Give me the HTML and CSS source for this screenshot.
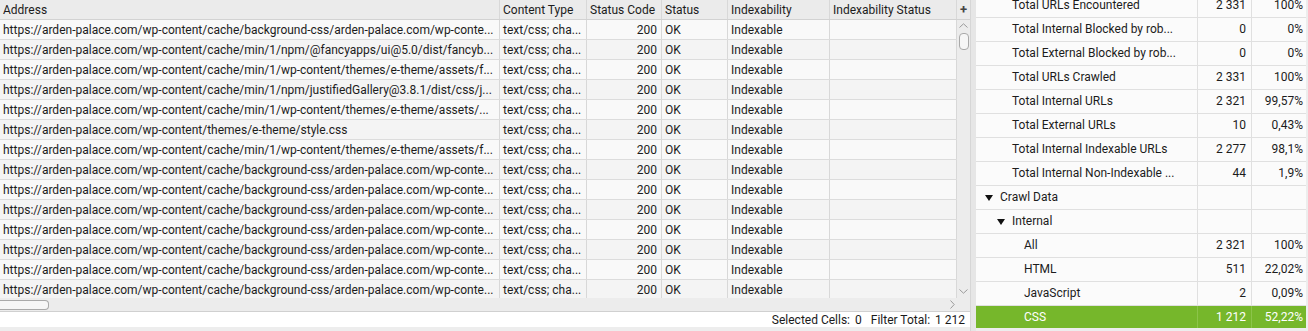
FILE: index.html
```html
<!DOCTYPE html>
<html lang="en">
<head>
    <meta charset="UTF-8">
    <title>Crawl Overview</title>
    <link rel="stylesheet" href="styles.css">
</head>
<body>

<div class="window">

    <!-- URL grid -->
    <div class="grid-pane">
        <div class="grid-head">
            <div class="cell col-address">Address</div>
            <div class="cell col-type">Content Type</div>
            <div class="cell col-code">Status Code</div>
            <div class="cell col-status">Status</div>
            <div class="cell col-index">Indexability</div>
            <div class="cell col-istatus">Indexability Status</div>
            <div class="corner">+</div>
        </div>

        <div class="grid-main">
            <div class="grid-body" id="grid-body"></div>
            <div class="vscroll">
                <svg class="arrow-up" width="9" height="5" viewBox="0 0 9 5"><path d="M0.5 4.5 L4.5 0.8 L8.5 4.5" fill="none" stroke="#9a9a9a" stroke-width="1"/></svg>
                <div class="vthumb"></div>
                <svg class="arrow-down" width="9" height="5" viewBox="0 0 9 5"><path d="M0.5 0.5 L4.5 4.2 L8.5 0.5" fill="none" stroke="#9a9a9a" stroke-width="1"/></svg>
            </div>
        </div>

        <div class="hscroll">
            <div class="hthumb"></div>
            <svg class="arrow-right" width="5" height="9" viewBox="0 0 5 9"><path d="M0.5 0.5 L4.2 4.5 L0.5 8.5" fill="none" stroke="#9a9a9a" stroke-width="1"/></svg>
        </div>

        <div class="status-bar">
            <span>Selected Cells:</span><span class="val">0</span>
            <span class="gap">Filter Total:</span><span class="val">1 212</span>
        </div>
    </div>

    <div class="splitter"></div>

    <!-- Overview tree -->
    <div class="overview-pane">
        <div class="tree" id="tree"></div>
    </div>

</div>

<script>
    // Rows of the URL grid
    const urls = [
        'https://arden-palace.com/wp-content/cache/background-css/arden-palace.com/wp-conte...',
        'https://arden-palace.com/wp-content/cache/min/1/npm/@fancyapps/ui@5.0/dist/fancyb...',
        'https://arden-palace.com/wp-content/cache/min/1/wp-content/themes/e-theme/assets/f...',
        'https://arden-palace.com/wp-content/cache/min/1/npm/justifiedGallery@3.8.1/dist/css/j...',
        'https://arden-palace.com/wp-content/cache/min/1/wp-content/themes/e-theme/assets/...',
        'https://arden-palace.com/wp-content/themes/e-theme/style.css',
        'https://arden-palace.com/wp-content/cache/min/1/wp-content/themes/e-theme/assets/f...',
        'https://arden-palace.com/wp-content/cache/background-css/arden-palace.com/wp-conte...',
        'https://arden-palace.com/wp-content/cache/background-css/arden-palace.com/wp-conte...',
        'https://arden-palace.com/wp-content/cache/background-css/arden-palace.com/wp-conte...',
        'https://arden-palace.com/wp-content/cache/background-css/arden-palace.com/wp-conte...',
        'https://arden-palace.com/wp-content/cache/background-css/arden-palace.com/wp-conte...',
        'https://arden-palace.com/wp-content/cache/background-css/arden-palace.com/wp-conte...',
        'https://arden-palace.com/wp-content/cache/background-css/arden-palace.com/wp-conte...'
    ];

    const body = document.getElementById('grid-body');
    urls.forEach((url, i) => {
        const row = document.createElement('div');
        row.className = 'grid-row' + (i % 2 ? ' odd' : '');
        row.innerHTML =
            `<div class="cell col-address">${url}</div>` +
            `<div class="cell col-type">text/css; cha...</div>` +
            `<div class="cell col-code">200</div>` +
            `<div class="cell col-status">OK</div>` +
            `<div class="cell col-index">Indexable</div>` +
            `<div class="cell col-istatus"></div>`;
        body.appendChild(row);
    });

    // Overview tree: [label, count, percent, level, expandable, selected]
    const items = [
        ['Total URLs Encountered', '2 331', '100%', 2],
        ['Total Internal Blocked by rob...', '0', '0%', 2],
        ['Total External Blocked by rob...', '0', '0%', 2],
        ['Total URLs Crawled', '2 331', '100%', 2],
        ['Total Internal URLs', '2 321', '99,57%', 2],
        ['Total External URLs', '10', '0,43%', 2],
        ['Total Internal Indexable URLs', '2 277', '98,1%', 2],
        ['Total Internal Non-Indexable ...', '44', '1,9%', 2],
        ['Crawl Data', '', '', 1, true],
        ['Internal', '', '', 2, true],
        ['All', '2 321', '100%', 3],
        ['HTML', '511', '22,02%', 3],
        ['JavaScript', '2', '0,09%', 3],
        ['CSS', '1 212', '52,22%', 3, false, true]
    ];

    const tree = document.getElementById('tree');
    items.forEach(item => {
        const [label, count, pct, level, expandable, selected] = item;
        const row = document.createElement('div');
        row.className = 'tree-row' + (selected ? ' selected' : '');
        const toggle = expandable ? '<span class="toggle"></span>' : '';
        row.innerHTML =
            `<div class="tcell t-label level-${level}${expandable ? ' branch' : ''}">${toggle}${label}</div>` +
            `<div class="tcell t-num">${count}</div>` +
            `<div class="tcell t-pct">${pct}</div>`;
        tree.appendChild(row);
    });
</script>

</body>
</html>
```

FILE: styles.css
```css
body {
    margin: 0;
    font-family: Roboto, "Liberation Sans", sans-serif;
    font-size: 12px;
    color: #1c1c1c;
    background-color: #ededed;
}

.window {
    display: flex;
    width: 1308px;
    height: 331px;
    overflow: hidden;
    background-color: #ededed;
}

/* URL grid */
.grid-pane {
    width: 970px;
    display: flex;
    flex-direction: column;
}

.grid-head,
.grid-row {
    display: flex;
}

.grid-head {
    height: 19px;
    background-color: #ebebeb;
    border-bottom: 1px solid #d2d2d2;
}

.cell {
    box-sizing: border-box;
    padding: 1px 3px 0;
    border-right: 1px solid #d8d8d8;
    line-height: 18px;
    white-space: nowrap;
    overflow: hidden;
}

.col-address { width: 500px; }
.col-type    { width: 87px; }
.col-code    { width: 75px; text-align: right; padding-right: 4px; }
.col-status  { width: 66px; }
.col-index   { width: 102px; }
.col-istatus { width: 127px; }

.grid-head .col-code {
    text-align: left;
}

.corner {
    width: 13px;
    line-height: 19px;
    text-align: center;
    font-weight: bold;
    font-size: 13px;
    color: #444;
}

.grid-main {
    display: flex;
    height: 278px;
}

.grid-body {
    width: 957px;
    overflow: hidden;
    background-color: #f7f7f7;
}

.grid-row {
    height: 19px;
    border-bottom: 1px solid #dcdcdc;
    background-color: #f9f9f9;
}

.grid-row.odd {
    background-color: #f4f4f4;
}

.vscroll {
    width: 13px;
    display: flex;
    flex-direction: column;
    align-items: center;
    background-color: #ececec;
}

.arrow-up {
    margin-top: 3px;
}

.vthumb {
    margin-top: 5px;
    width: 8px;
    height: 15px;
    border: 1px solid #a9a9a9;
    border-radius: 4px;
    background-color: #f6f6f6;
}

.arrow-down {
    margin-top: auto;
    margin-bottom: 4px;
}

.hscroll {
    height: 13px;
    display: flex;
    align-items: center;
    background-color: #ececec;
    border-bottom: 1px solid #d0d0d0;
}

.hthumb {
    width: 48px;
    height: 8px;
    border: 1px solid #a9a9a9;
    border-left: none;
    border-radius: 0 4px 4px 0;
    background-color: #f6f6f6;
}

.arrow-right {
    margin-left: auto;
    margin-right: 15px;
}

.status-bar {
    height: 15px;
    line-height: 17px;
    background-color: #ffffff;
    text-align: right;
    padding-right: 5px;
    color: #1a1a1a;
}

.status-bar .val {
    margin-left: 5px;
}

.status-bar .gap {
    margin-left: 6px;
}

.splitter {
    width: 6px;
    background-color: #e6e6e6;
    border-left: 1px solid #d6d6d6;
    box-sizing: border-box;
}

/* Overview tree */
.overview-pane {
    width: 330px;
    height: 328px;
    overflow: hidden;
    background-color: #fbfbfb;
}

.tree {
    margin-top: -6px;
}

.tree-row {
    display: flex;
    height: 23px;
    border-bottom: 1px solid #e0e0e0;
    background-color: #fbfbfb;
}

.tcell {
    box-sizing: border-box;
    line-height: 23px;
    white-space: nowrap;
    overflow: hidden;
    border-right: 1px solid #e0e0e0;
}

.t-label { width: 222px; position: relative; }
.t-num   { width: 54px; text-align: right; padding-right: 5px; }
.t-pct   { width: 54px; text-align: right; padding-right: 3px; border-right: none; }

.level-1 { padding-left: 24px; }
.level-2 { padding-left: 36px; }
.level-3 { padding-left: 48px; }

.toggle {
    position: absolute;
    top: 9px;
    width: 0;
    height: 0;
    border-left: 4px solid transparent;
    border-right: 4px solid transparent;
    border-top: 6px solid #111;
}

.level-1 .toggle { left: 9px; }
.level-2 .toggle { left: 21px; }

.tree-row.selected {
    background-color: #76b72b;
    color: #ffffff;
}

.tree-row.selected .tcell {
    border-right-color: #8cc44a;
}
```
